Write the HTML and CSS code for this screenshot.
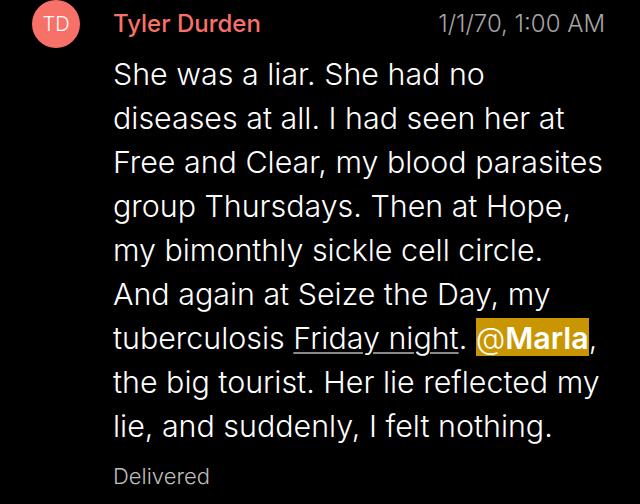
FILE: index.html
```html
<!DOCTYPE html>
<html>
<head>
<meta charset="utf-8">
<link rel="stylesheet" href="styles.css">
</head>
<body>
<div class="message">
  <div class="avatar">TD</div>
  <div class="content">
    <div class="header">
      <span class="name">Tyler Durden</span>
      <span class="time">1/1/70, 1:00 AM</span>
    </div>
    <div class="body">She was a liar. She had no diseases at all. I had seen her at Free and Clear, my blood parasites group Thursdays. Then at Hope, my bimonthly sickle cell circle. And again at Seize the Day, my tuberculosis <span class="link">Friday night</span>. <span class="mention">@<b>Marla</b></span>, the big tourist. Her lie reflected my lie, and suddenly, I felt nothing.</div>
    <div class="status">Delivered</div>
  </div>
</div>
</body>
</html>
```
FILE: styles.css
```css
html, body {
  margin: 0;
  padding: 0;
  background: #000;
  width: 640px;
  height: 504px;
  overflow: hidden;
  font-family: Inter, "Noto Sans", sans-serif;
}
.message {
  display: flex;
  padding: 0 35px 0 32px;
  gap: 33px;
}
.avatar {
  flex: none;
  width: 48px;
  height: 48px;
  border-radius: 50%;
  background: #f87168;
  color: #fff;
  font-size: 20px;
  font-weight: 300;
  display: flex;
  align-items: center;
  justify-content: center;
}
.content {
  flex: 1;
  min-width: 0;
}
.header {
  display: flex;
  justify-content: space-between;
  align-items: flex-start;
  height: 48px;
  padding-top: 4px;
  line-height: 40px;
}
.name {
  color: #f87168;
  font-size: 24px;
  font-weight: 500;
}
.time {
  color: #a5a5a5;
  font-size: 24px;
  font-weight: 300;
}
.body {
  color: #fff;
  font-size: 30.4px;
  font-weight: 300;
  line-height: 44px;
}
.link {
  text-decoration: underline;
  text-decoration-color: #8a8a8a;
  text-decoration-thickness: 2px;
  text-underline-offset: 3px;
}
.mention {
  background: #c99500;
  padding: 2px 0 0;
}
.mention b {
  font-weight: 600;
}
.status {
  margin-top: 15px;
  color: #bdbdbd;
  font-size: 22px;
  font-weight: 300;
  line-height: 26px;
}
```
